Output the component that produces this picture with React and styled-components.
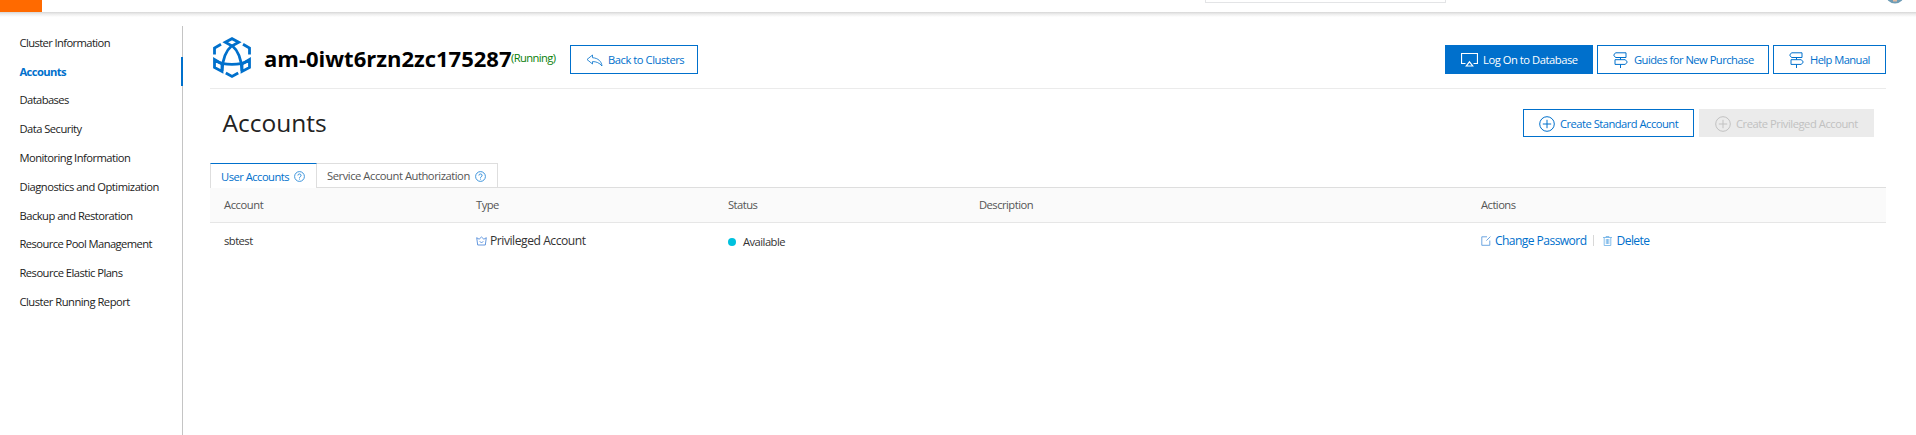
import React from "react";
import styled, { createGlobalStyle, css } from "styled-components";

const BLUE = "#0070cc";

const Global = createGlobalStyle`
  * { box-sizing: border-box; }
  html, body { margin: 0; background: #fff; overflow: hidden; }
  body {
    font-family: "Open Sans", "Noto Sans", sans-serif;
    font-size: 11.2px;
    line-height: 16px;
    letter-spacing: -0.52px;
    color: #333;
  }
  svg { display: block; flex: none; }
`;

const Page = styled.div`
  display: flex;
  flex-direction: column;
  height: 435px;
`;

const TopBar = styled.header`
  display: flex;
  align-items: flex-start;
  height: 12px;
  flex: none;
  overflow: hidden;
  background: #fff;
`;
const TopShadow = styled.div`
  height: 5px;
  flex: none;
  background: linear-gradient(#d6d6d6, #ececec 40%, #fff);
`;
const Brand = styled.div`
  width: 42px;
  height: 12px;
  background: #ff6a00;
`;
const SearchBox = styled.div`
  width: 241px;
  height: 3px;
  margin-left: 1163px;
  border: 1px solid #e3e4e6;
  border-top: 0;
`;
const Avatar = styled.svg`
  margin-left: 440px;
`;

const Body = styled.div`
  display: flex;
  flex: 1;
  padding-top: 9px;
`;

const Sidebar = styled.nav`
  width: 183px;
  padding-top: 2px;
  border-right: 1px solid #c4c4c4;
  flex: none;
`;
const NavItem = styled.a`
  display: flex;
  align-items: center;
  height: 28.8px;
  padding: 1px 0 0 19.5px;
  color: #222;
  letter-spacing: ${(p) => p.$ls}px;
  ${(p) =>
    p.$active &&
    css`
      margin-right: -1px;
      border-right: 2px solid ${BLUE};
      color: ${BLUE};
      font-weight: 700;
    `}
`;

const Main = styled.main`
  width: 1676px;
  margin-left: 27px;
`;

const ClusterHeader = styled.div`
  display: flex;
  align-items: flex-start;
  height: 63px;
  padding-top: 11px;
  border-bottom: 1px solid #ebebeb;
`;
const ClusterId = styled.h1`
  margin: 7px 0 0 13px;
  width: 247px;
  font-size: 22px;
  line-height: 28px;
  font-weight: 700;
  color: #000;
  white-space: nowrap;
  letter-spacing: 0;
`;
const Running = styled.span`
  margin-top: 13px;
  width: 59px;
  color: #0a800a;
  letter-spacing: -0.6px;
`;
const LogoSlot = styled.div`
  margin-left: 3px;
`;
const Actions = styled.div`
  display: flex;
  gap: ${(p) => p.$gap}px;
  margin-left: auto;
`;

const Button = styled.button`
  display: flex;
  align-items: center;
  width: ${(p) => p.$w}px;
  height: ${(p) => p.$h ?? 29}px;
  margin: ${(p) => p.$m ?? "8px 0 0"};
  padding: 1px 0 0 15px;
  gap: ${(p) => p.$gap ?? 5}px;
  border: 1px solid ${BLUE};
  background: #fff;
  color: ${BLUE};
  font: inherit;
  letter-spacing: ${(p) => p.$ls}px;
  white-space: nowrap;
  ${(p) =>
    p.$primary &&
    css`
      background: ${BLUE};
      color: #fff;
    `}
  ${(p) =>
    p.disabled &&
    css`
      background: #ebebeb;
      border-color: #ebebeb;
      color: #c1c1c1;
    `}
`;

const TitleRow = styled.div`
  display: flex;
  align-items: flex-start;
  height: 74px;
  padding: 20px 12px 0 12.5px;
`;
const PageTitle = styled.h2`
  margin: -3px 0 0;
  font-size: 24.5px;
  line-height: 34px;
  font-weight: 400;
  letter-spacing: 0;
  color: #222;
`;

const Tabs = styled.div`
  display: flex;
  height: 25px;
  border-bottom: 1px solid #dedede;
`;
const Tab = styled.div`
  display: flex;
  align-items: center;
  justify-content: space-between;
  width: ${(p) => p.$w}px;
  height: 24px;
  padding: 1px 11px 0 10px;
  border: 1px solid #dedede;
  border-bottom: 0;
  border-left-width: ${(p) => (p.$active ? 1 : 0)}px;
  color: #555;
  letter-spacing: ${(p) => p.$ls}px;
  white-space: nowrap;
  ${(p) =>
    p.$active &&
    css`
      height: 25px;
      border-top-color: ${BLUE};
      background: #fff;
      color: ${BLUE};
    `}
`;

const Row = styled.div`
  display: grid;
  grid-template-columns: 252px 252px 251px 502px 1fr;
  align-items: center;
  height: 35px;
  padding-left: 14px;
`;
const HeadRow = styled(Row)`
  background: #fafafa;
  border-bottom: 1px solid #e6e6e6;
  color: #555;
`;
const Cell = styled.div`
  display: flex;
  align-items: center;
  gap: ${(p) => p.$gap ?? 0}px;
  padding-top: ${(p) => p.$drop ?? 0}px;
  font-size: ${(p) => p.$size ?? 11.2}px;
  letter-spacing: ${(p) => p.$ls ?? -0.52}px;
  white-space: nowrap;
`;
const Dot = styled.span`
  width: 8px;
  height: 8px;
  border-radius: 50%;
  background: #00c1de;
`;
const Link = styled.a`
  display: flex;
  align-items: center;
  gap: 4px;
  color: ${BLUE};
`;
const Divider = styled.span`
  width: 1px;
  height: 11px;
  margin: 0 9px 0 7px;
  background: #d8d8d8;
`;

const Logo = () => (
  <svg width="38" height="42" viewBox="0 0 38 42" fill="none" stroke={BLUE} strokeWidth="2.8">
    <path d="M12.3 5.300L19 1.700l6.700 3.600L19 9z" />
    <path d="M19 8.500C13 13.500 9.500 20 9 34M19 8.500c6 5 9.500 11.500 10 25.500" />
    <path d="M1.500 17.500v-6.500L8 7.200M36.500 17.500v-6.500L30 7.200" />
    <path d="M1.500 22.500v8L9 34.500V27zM36.500 22.500v8L29 34.500V27z" />
    <path d="M3 24c8 4.500 24 4.500 32 0M12.800 36L19 39.500l6.200-3.500" />
  </svg>
);

const BackIcon = () => (
  <svg width="17" height="13" viewBox="0 0 17 13" fill="none" stroke={BLUE} strokeWidth="0.8" strokeLinejoin="round">
    <path d="M6.500 1L1 5.500 6.500 10V7.600C10 7.500 13.500 8.800 16 12c-.5-4.500-3.700-7.900-9.500-8.300z" />
  </svg>
);

const ScreenIcon = () => (
  <svg width="17" height="16" viewBox="0 0 17 16" fill="none" stroke="#fff" strokeWidth="1.200">
    <path d="M4.500 11.500h-4v-10h16v10h-4M8.500 9.800l3.200 4.200H5.300z" />
  </svg>
);

const SignIcon = () => (
  <svg width="15" height="16" viewBox="0 0 15 16" fill="none" stroke={BLUE} strokeWidth="1" strokeLinejoin="round">
    <path d="M2.500 .8h10.500V5.500H2.500L.7 3.100zM2 7.700h10.300L14.300 10l-2 2.400H2zM7.500 5.500v2.200M7.500 12.400V16" />
  </svg>
);

const PlusIcon = () => (
  <svg width="16" height="16" viewBox="0 0 16 16" fill="none" stroke="currentColor" strokeWidth="1">
    <circle cx="8" cy="8" r="7.300" />
    <path d="M8 3.800v8.400M3.800 8h8.400" />
  </svg>
);

const HelpIcon = () => (
  <svg width="11" height="11" viewBox="0 0 11 11" fill="none" stroke="#2b8ad8" strokeWidth="0.9">
    <circle cx="5.500" cy="5.500" r="4.900" />
    <path d="M3.900 4.500a1.600 1.500 0 1 1 2.300 1.300c-.5.300-.7.500-.7 1.100M5.500 7.600v1" />
  </svg>
);

const CrownIcon = () => (
  <svg width="11" height="10" viewBox="0 0 11 10" fill="none" stroke="#3f7fd6" strokeWidth="0.8" strokeLinejoin="round">
    <path d="M1.700 9L.7 1.700l2.400 1.500L5.500 1l2.400 2.200 2.400-1.500L9.300 9zM3.700 5.200l1.800 1.800 1.800-1.800" />
  </svg>
);

const EditIcon = () => (
  <svg width="10" height="10" viewBox="0 0 10 10" fill="none" stroke="#4a90d9" strokeWidth="0.8">
    <path d="M6 .8H.8v8.500h8V4.500M5.400 4.600L9.400.6" />
  </svg>
);

const TrashIcon = () => (
  <svg width="9" height="10" viewBox="0 0 9 10" fill="none" stroke="#6aaee6" strokeWidth="0.8">
    <path d="M0 1.500h9M3 1.500V.5h3v1M1.200 1.500v8h6.600v-8M3.300 3v5M4.500 3v5M5.800 3v5" />
  </svg>
);

const NAV = [
  ["Cluster Information", -0.6],
  ["Accounts", -0.6],
  ["Databases", -0.6],
  ["Data Security", -0.54],
  ["Monitoring Information", -0.53],
  ["Diagnostics and Optimization", -0.48],
  ["Backup and Restoration", -0.52],
  ["Resource Pool Management", -0.58],
  ["Resource Elastic Plans", -0.54],
  ["Cluster Running Report", -0.5],
];

export default function App() {
  return (
    <Page>
      <Global />
      <TopBar>
        <Brand />
        <SearchBox />
        <Avatar width="18" height="4" viewBox="0 0 18 4">
          <circle cx="9" cy="-6" r="9.500" fill="#6d9cb5" />
          <path d="M7 0h4v1.500h-4z" fill="#e3b9a0" />
        </Avatar>
      </TopBar>
      <TopShadow />
      <Body>
        <Sidebar>
          {NAV.map(([name, ls]) => (
            <NavItem key={name} $active={name === "Accounts"} $ls={ls}>
              {name}
            </NavItem>
          ))}
        </Sidebar>
        <Main>
          <ClusterHeader>
            <LogoSlot>
              <Logo />
            </LogoSlot>
            <ClusterId>am-0iwt6rzn2zc175287</ClusterId>
            <Running>(Running)</Running>
            <Button $w={128} $ls={-0.45}>
              <BackIcon />
              Back to Clusters
            </Button>
            <Actions $gap={4}>
              <Button $w={148} $ls={-0.46} $primary>
                <ScreenIcon />
                Log On to Database
              </Button>
              <Button $w={172} $ls={-0.52} $gap={6}>
                <SignIcon />
                Guides for New Purchase
              </Button>
              <Button $w={113} $ls={-0.58} $gap={6}>
                <SignIcon />
                Help Manual
              </Button>
            </Actions>
          </ClusterHeader>
          <TitleRow>
            <PageTitle>Accounts</PageTitle>
            <Actions $gap={5}>
              <Button $w={171} $h={28} $m="0" $ls={-0.52}>
                <PlusIcon />
                Create Standard Account
              </Button>
              <Button $w={175} $h={28} $m="0" $ls={-0.46} disabled>
                <PlusIcon />
                Create Privileged Account
              </Button>
            </Actions>
          </TitleRow>
          <Tabs>
            <Tab $w={107} $ls={-0.52} $active>
              User Accounts
              <HelpIcon />
            </Tab>
            <Tab $w={181} $ls={-0.45}>
              Service Account Authorization
              <HelpIcon />
            </Tab>
          </Tabs>
          <HeadRow>
            <Cell $ls={-0.43}>Account</Cell>
            <Cell>Type</Cell>
            <Cell>Status</Cell>
            <Cell>Description</Cell>
            <Cell>Actions</Cell>
          </HeadRow>
          <Row>
            <Cell $drop={1}>sbtest</Cell>
            <Cell $drop={1} $gap={3} $size={12.1} $ls={-0.45}>
              <CrownIcon />
              Privileged Account
            </Cell>
            <Cell $drop={3} $gap={7}>
              <Dot />
              Available
            </Cell>
            <Cell />
            <Cell $size={12.1} $ls={-0.58}>
              <Link>
                <EditIcon />
                Change Password
              </Link>
              <Divider />
              <Link>
                <TrashIcon />
                Delete
              </Link>
            </Cell>
          </Row>
        </Main>
      </Body>
    </Page>
  );
}
